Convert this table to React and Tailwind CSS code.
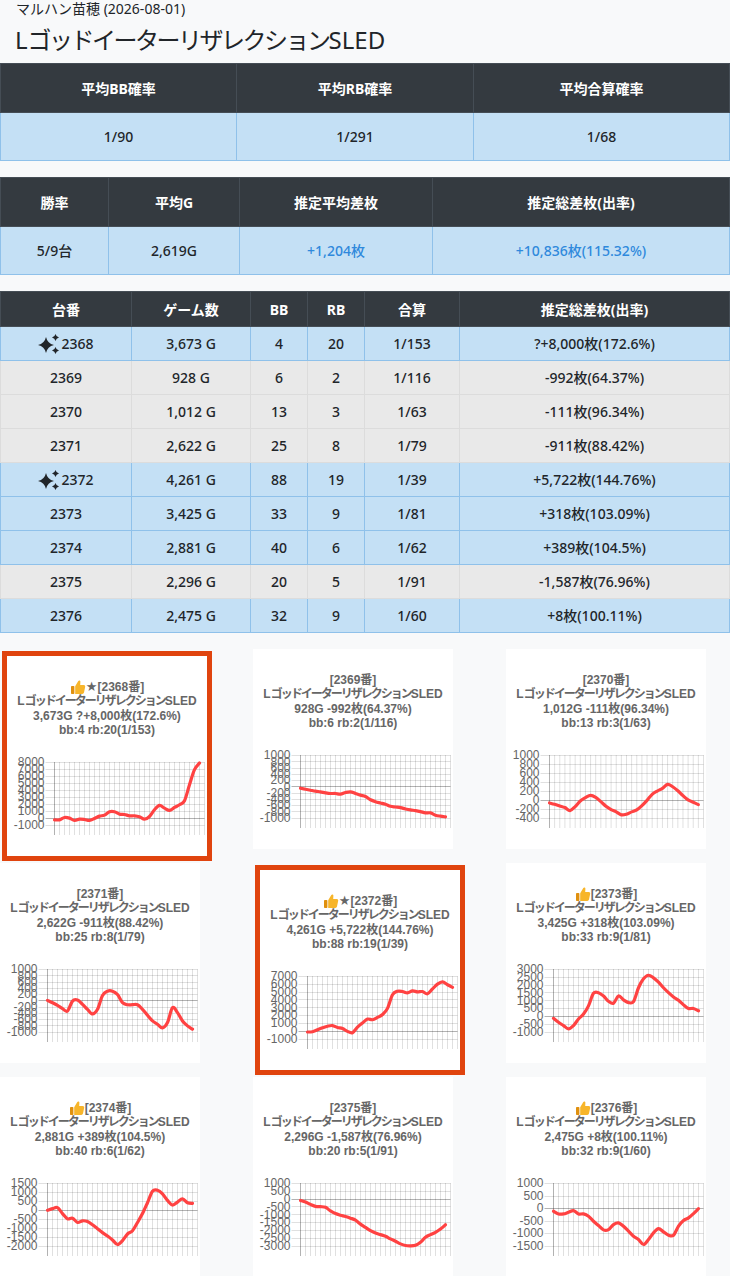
import React from "react";

const CHARTS = [
  { no: 2368, hl: true, thumb: true, star: true, l3: "3,673G ?+8,000枚(172.6%)", l4: "bb:4 rb:20(1/153)", max: 8000, min: -1000, step: 1000, ztop: 362, zbot: 549,
    zy: [535,535,528,530,537,533,534,537,531,524,521,511,511,518,519,523,523,526,533,525,505,492,500,507,498,490,478,430,385,365] },
  { no: 2369, l3: "928G -992枚(64.37%)", l4: "bb:6 rb:2(1/116)", max: 1000, min: -1000, step: 200, ztop: 342, zbot: 532,
    zy: [443,446,449,452,454,457,459,459,461,456,454,459,464,468,478,484,488,492,498,500,502,506,509,511,514,518,518,525,528,530] },
  { no: 2370, l3: "1,012G -111枚(96.34%)", l4: "bb:13 rb:3(1/63)", max: 1000, min: -400, step: 200, ztop: 342, zbot: 531,
    zy: [487,491,496,501,510,498,481,471,464,470,483,497,507,514,523,521,514,508,495,479,461,451,443,431,438,450,465,478,485,492] },
  { no: 2371, l3: "2,622G -911枚(88.42%)", l4: "bb:25 rb:8(1/79)", max: 1000, min: -1000, step: 200, ztop: 338, zbot: 527,
    zy: [433,440,448,458,465,435,432,445,460,474,460,418,405,405,415,440,446,446,446,460,478,495,505,516,500,455,470,495,510,520] },
  { no: 2372, hl: true, thumb: true, star: true, l3: "4,261G +5,722枚(144.76%)", l4: "bb:88 rb:19(1/39)", max: 7000, min: -1000, step: 1000, ztop: 355, zbot: 548,
    zy: [528,527,521,515,510,508,514,517,526,530,513,500,488,490,483,474,455,413,402,403,407,401,404,403,410,395,380,373,382,390] },
  { no: 2373, thumb: true, l3: "3,425G +318枚(103.09%)", l4: "bb:33 rb:9(1/81)", max: 3000, min: -1000, step: 500, ztop: 338, zbot: 528,
    zy: [488,500,510,520,510,490,475,450,412,410,420,436,442,420,432,440,437,395,368,357,365,378,395,410,423,433,447,458,458,465] },
  { no: 2374, thumb: true, l3: "2,881G +389枚(104.5%)", l4: "bb:40 rb:6(1/62)", max: 1500, min: -2000, step: 500, ztop: 335, zbot: 525,
    zy: [418,413,410,428,444,442,455,450,452,462,474,486,496,508,522,510,490,480,455,428,395,360,357,368,388,402,393,383,395,397] },
  { no: 2375, l3: "2,296G -1,587枚(76.96%)", l4: "bb:20 rb:5(1/91)", max: 1000, min: -3000, step: 500, ztop: 335, zbot: 525,
    zy: [388,393,400,406,407,409,420,428,433,437,442,448,460,470,480,487,492,497,505,512,520,525,526,524,515,500,492,485,475,462] },
  { no: 2376, thumb: true, l3: "2,475G +8枚(100.11%)", l4: "bb:32 rb:9(1/60)", max: 1000, min: -1500, step: 500, ztop: 335, zbot: 523,
    zy: [420,428,428,423,418,428,428,435,450,463,476,475,460,455,465,480,495,505,520,505,485,472,482,492,492,465,448,440,427,412] },
];

const ROWS = [
  { no: "2368", g: "3,673 G", bb: "4", rb: "20", t: "1/153", d: "?+8,000枚(172.6%)", pos: true, sp: true },
  { no: "2369", g: "928 G", bb: "6", rb: "2", t: "1/116", d: "-992枚(64.37%)" },
  { no: "2370", g: "1,012 G", bb: "13", rb: "3", t: "1/63", d: "-111枚(96.34%)" },
  { no: "2371", g: "2,622 G", bb: "25", rb: "8", t: "1/79", d: "-911枚(88.42%)" },
  { no: "2372", g: "4,261 G", bb: "88", rb: "19", t: "1/39", d: "+5,722枚(144.76%)", pos: true, sp: true },
  { no: "2373", g: "3,425 G", bb: "33", rb: "9", t: "1/81", d: "+318枚(103.09%)", pos: true },
  { no: "2374", g: "2,881 G", bb: "40", rb: "6", t: "1/62", d: "+389枚(104.5%)", pos: true },
  { no: "2375", g: "2,296 G", bb: "20", rb: "5", t: "1/91", d: "-1,587枚(76.96%)" },
  { no: "2376", g: "2,475 G", bb: "32", rb: "9", t: "1/60", d: "+8枚(100.11%)", pos: true },
];

function Sparkle() {
  const star = (cx, cy, r) => {
    const k = r * 0.18;
    return `M${cx} ${cy - r} Q${cx + k} ${cy - k} ${cx + r} ${cy} Q${cx + k} ${cy + k} ${cx} ${cy + r} Q${cx - k} ${cy + k} ${cx - r} ${cy} Q${cx - k} ${cy - k} ${cx} ${cy - r}Z`;
  };
  return (
    <svg width="23" height="20" viewBox="0 0 23 20" className="shrink-0">
      <path d={star(8, 11, 8)} fill="#212529" />
      <path d={star(17.5, 3.5, 3.5)} fill="#212529" />
      <path d={star(17.5, 16.5, 3.5)} fill="#212529" />
    </svg>
  );
}

function Thumb() {
  return (
    <svg width="16" height="16" viewBox="0 0 16 16" className="shrink-0">
      <rect x="1" y="7" width="3.4" height="8" rx="0.8" fill="#e0900e" />
      <path d="M5.2 7.2 L8.3 2 C8.9 1 10.4 1.3 10.4 2.6 L10.2 6 H13.8 C14.8 6 15.4 6.9 15.2 7.8 L14 13.6 C13.8 14.5 13.1 15 12.3 15 H5.2 Z" fill="#f7b52a" />
    </svg>
  );
}

function labelW(s) {
  let w = 0;
  for (const ch of s) w += ch === "-" ? 4 : 6.67;
  return w;
}

function smoothPath(pts) {
  let d = `M${pts[0][0].toFixed(2)} ${pts[0][1].toFixed(2)}`;
  for (let i = 0; i < pts.length - 1; i++) {
    const p0 = pts[i - 1] || pts[i];
    const p1 = pts[i];
    const p2 = pts[i + 1];
    const p3 = pts[i + 2] || p2;
    const c1x = p1[0] + (p2[0] - p0[0]) / 6;
    const c1y = p1[1] + (p2[1] - p0[1]) / 6;
    const c2x = p2[0] - (p3[0] - p1[0]) / 6;
    const c2y = p2[1] - (p3[1] - p1[1]) / 6;
    d += ` C${c1x.toFixed(2)} ${c1y.toFixed(2)} ${c2x.toFixed(2)} ${c2y.toFixed(2)} ${p2[0].toFixed(2)} ${p2[1].toFixed(2)}`;
  }
  return d;
}

function Chart({ c }) {
  const top = 16;
  const bot = 78.5;
  const tickBot = 89;
  const labels = [];
  for (let v = c.max; v >= c.min; v -= c.step) labels.push(v);
  const maxW = Math.max(...labels.map((l) => labelW(String(l))));
  const left = Math.round(6 + maxW + 10) + 0.5;
  const right = 197.5;
  const n = 30;
  const dx = (right - left) / n;
  const yOf = (v) => top + ((c.max - v) / (c.max - c.min)) * (bot - top);
  const pts = c.zy.map((z, i) => [left + i * dx, top + ((z - c.ztop) / (c.zbot - c.ztop)) * (bot - top)]);
  const vlines = [];
  for (let i = 0; i <= n; i++) vlines.push(left + i * dx);
  return (
    <svg width="200" height="110" viewBox="0 0 200 110" className="block">
      {vlines.map((x, i) => (
        <line key={"v" + i} x1={x} x2={x} y1={top} y2={tickBot} stroke={i === 0 ? "rgba(0,0,0,0.3)" : "rgba(0,0,0,0.12)"} strokeWidth="1" />
      ))}
      {labels.map((v, i) => {
        const y = Math.round(yOf(v)) + 0.5;
        return (
          <line key={"h" + i} x1={left - 9} x2={right} y1={y} y2={y} stroke={v === 0 ? "rgba(0,0,0,0.3)" : "rgba(0,0,0,0.12)"} strokeWidth="1" />
        );
      })}
      {labels.map((v, i) => (
        <text key={"t" + i} x={left - 10} y={yOf(v)} dy="0.36em" textAnchor="end" fontSize="12" fill="#666" fontFamily="'Liberation Sans', Arial, sans-serif">
          {v}
        </text>
      ))}
      <path d={smoothPath(pts)} fill="none" stroke="#ff4242" strokeWidth="3.2" strokeLinejoin="round" strokeLinecap="round" />
    </svg>
  );
}

function Card({ c }) {
  const inner = (
    <div className="w-[200px] h-[200px] bg-white flex flex-col">
      <div className="h-[90px] pt-[24px] text-center text-[12px] leading-[14.4px] font-bold text-[#666] font-['Liberation_Sans','Noto_Sans_CJK_JP',sans-serif]">
        <div className="flex items-center justify-center h-[14.4px]">
          {c.thumb && <Thumb />}
          {c.star && <span className="font-['DejaVu_Sans',sans-serif] text-[13px] leading-[14px]">★</span>}
          <span>[{c.no}番]</span>
        </div>
        <div>
          L<span className="tracking-[-2px]">ゴッドイーターリザレクション</span>SLED
        </div>
        <div>{c.l3}</div>
        <div>{c.l4}</div>
      </div>
      <Chart c={c} />
    </div>
  );
  if (c.hl) return <div className="m-[2px] border-[5px] border-[#e0440e] w-fit">{inner}</div>;
  return <div className="w-fit">{inner}</div>;
}

const HEAD = "bg-[#343a40] text-white font-bold text-[14px] border border-[#454d55] text-center align-middle";
const BLUE = "bg-[#c4e0f5] border border-[#8fc1ea] text-center align-middle";
const GRAY = "bg-[#e9e9e9] border border-[#dcdcdc] text-center align-middle";

export default function App() {
  return (
    <div className="min-h-[1276px] bg-[#f8f9fa] text-[#212529] font-['Noto_Sans','Noto_Sans_CJK_JP',sans-serif]">
      <div className="px-4 text-[14px] leading-[17px]">マルハン苗穂 (2026-08-01)</div>
      <div className="px-[15px] h-[46px] flex items-center text-[24px] leading-[30px]">
        L<span className="tracking-[-2.5px]">ゴッドイーターリザレクション</span>SLED
      </div>

      <table className="w-full table-fixed border-collapse text-[14px] font-medium">
        <colgroup>
          <col className="w-[236px]" />
          <col className="w-[237px]" />
          <col />
        </colgroup>
        <tbody>
          <tr className="h-[49px]">
            <td className={HEAD}>平均BB確率</td>
            <td className={HEAD}>平均RB確率</td>
            <td className={HEAD}>平均合算確率</td>
          </tr>
          <tr className="h-[48px]">
            <td className={BLUE}>1/90</td>
            <td className={BLUE}>1/291</td>
            <td className={BLUE}>1/68</td>
          </tr>
        </tbody>
      </table>

      <table className="w-full table-fixed border-collapse text-[14px] font-medium mt-[16px]">
        <colgroup>
          <col className="w-[108px]" />
          <col className="w-[131px]" />
          <col className="w-[193px]" />
          <col />
        </colgroup>
        <tbody>
          <tr className="h-[49px]">
            <td className={HEAD}>勝率</td>
            <td className={HEAD}>平均G</td>
            <td className={HEAD}>推定平均差枚</td>
            <td className={HEAD}>推定総差枚(出率)</td>
          </tr>
          <tr className="h-[48px]">
            <td className={BLUE}>5/9台</td>
            <td className={BLUE}>2,619G</td>
            <td className={BLUE + " text-[#2f89dc]"}>+1,204枚</td>
            <td className={BLUE + " text-[#2f89dc]"}>+10,836枚(115.32%)</td>
          </tr>
        </tbody>
      </table>

      <table className="w-full table-fixed border-collapse text-[14px] font-medium mt-[16px]">
        <colgroup>
          <col className="w-[131px]" />
          <col className="w-[119px]" />
          <col className="w-[57px]" />
          <col className="w-[57px]" />
          <col className="w-[95px]" />
          <col />
        </colgroup>
        <tbody>
          <tr className="h-[35px]">
            <td className={HEAD}>台番</td>
            <td className={HEAD}>ゲーム数</td>
            <td className={HEAD}>BB</td>
            <td className={HEAD}>RB</td>
            <td className={HEAD}>合算</td>
            <td className={HEAD}>推定総差枚(出率)</td>
          </tr>
          {ROWS.map((r) => {
            const cls = r.pos ? BLUE : GRAY;
            return (
              <tr key={r.no} className="h-[34px]">
                <td className={cls}>
                  <div className="flex items-center justify-center">
                    {r.sp && <Sparkle />}
                    <span>{r.no}</span>
                  </div>
                </td>
                <td className={cls}>{r.g}</td>
                <td className={cls}>{r.bb}</td>
                <td className={cls}>{r.rb}</td>
                <td className={cls}>{r.t}</td>
                <td className={cls}>{r.d}</td>
              </tr>
            );
          })}
        </tbody>
      </table>

      <div className="grid grid-cols-[253px_253px_224px] items-start mt-4">
        {CHARTS.map((c) => (
          <Card key={c.no} c={c} />
        ))}
      </div>
    </div>
  );
}
